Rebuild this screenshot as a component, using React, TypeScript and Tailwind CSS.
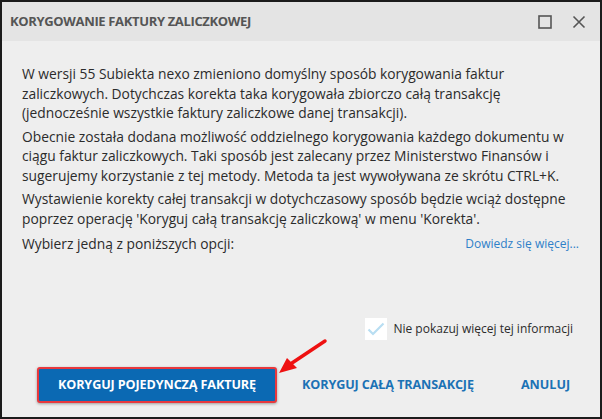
const App = () => {
    return (
        <div className="w-[602px] h-[419px] border-2 border-[#1b1b1b] bg-[#eeeeee] flex flex-col relative overflow-hidden" style={{ fontFamily: '"Open Sans", "Noto Sans", sans-serif' }}>
            {/* title bar */}
            <div className="h-[39px] bg-[#e4e4e4] flex items-center justify-between pl-[8px] pr-[14px] shrink-0">
                <div className="text-[13px] font-bold text-[#555555] tracking-[-0.35px]">KORYGOWANIE FAKTURY ZALICZKOWEJ</div>
                <div className="flex items-center gap-[20px]">
                    <svg width="14" height="14" viewBox="0 0 14 14">
                        <rect x="1" y="1" width="12" height="12" fill="none" stroke="#555" strokeWidth="1.6" />
                    </svg>
                    <svg width="14" height="14" viewBox="0 0 14 14">
                        <path d="M1.5 1.5 L12.5 12.5 M12.5 1.5 L1.5 12.5" stroke="#555" strokeWidth="1.6" />
                    </svg>
                </div>
            </div>

            {/* content */}
            <div className="flex-1 flex flex-col px-[20px] pt-[23px] text-[13.8px] leading-[19.5px] text-[#2b2b2b]">
                <p>
                    W wersji 55 Subiekta nexo zmieniono domyślny sposób korygowania faktur zaliczkowych. Dotychczas korekta taka korygowała zbiorczo całą transakcję (jednocześnie wszystkie faktury zaliczkowe danej transakcji).
                </p>
                <p className="mt-[4px]">
                    Obecnie została dodana możliwość oddzielnego korygowania każdego dokumentu w ciągu faktur zaliczkowych. Taki sposób jest zalecany przez Ministerstwo Finansów i sugerujemy korzystanie z tej metody. Metoda ta jest wywoływana ze skrótu CTRL+K.
                </p>
                <p className="mt-[4px]">
                    Wystawienie korekty całej transakcji w dotychczasowy sposób będzie wciąż dostępne poprzez operację 'Koryguj całą transakcję zaliczkową' w menu 'Korekta'.
                </p>
                <div className="mt-[6px] flex items-center justify-between">
                    <span>Wybierz jedną z poniższych opcji:</span>
                    <span className="text-[12px] text-[#2f80c8] pr-[1px]">Dowiedz się więcej...</span>
                </div>

                <div className="mt-[64px] flex items-center justify-end gap-[6px] pr-[7px]">
                    <div className="w-[22px] h-[22px] bg-white flex items-center justify-center">
                        <svg width="18" height="14" viewBox="0 0 18 14">
                            <path d="M1.5 7.5 L6 12 L16.5 1.5" fill="none" stroke="#b8def2" strokeWidth="2.2" />
                        </svg>
                    </div>
                    <span className="text-[12px] text-[#2b2b2b]">Nie pokazuj więcej tej informacji</span>
                </div>

                <div className="mt-[27px] flex items-center pl-[15px]">
                    <button className="w-[240px] h-[36px] bg-[#0b69b3] border-2 border-[#e8383d] rounded-[3px] shadow-[0_1px_3px_rgba(0,0,0,0.35)] text-white text-[12.6px] font-bold tracking-[-0.1px]">
                        KORYGUJ POJEDYNCZĄ FAKTURĘ
                    </button>
                    <span className="ml-[25px] text-[12.6px] font-bold text-[#1b72b5] tracking-[-0.1px]">KORYGUJ CAŁĄ TRANSAKCJĘ</span>
                    <span className="ml-[47px] text-[12.6px] font-bold text-[#1b72b5]">ANULUJ</span>
                </div>
            </div>

            {/* red arrow */}
            <svg className="absolute left-[274px] top-[336px]" width="52" height="40" viewBox="0 0 52 40">
                <path d="M49 3 L16 25" stroke="#ee1111" strokeWidth="3.5" strokeLinecap="round" />
                <path d="M3 35 L11 20 L21 30 Z" fill="#ee1111" />
            </svg>
        </div>
    );
};

export default App;
